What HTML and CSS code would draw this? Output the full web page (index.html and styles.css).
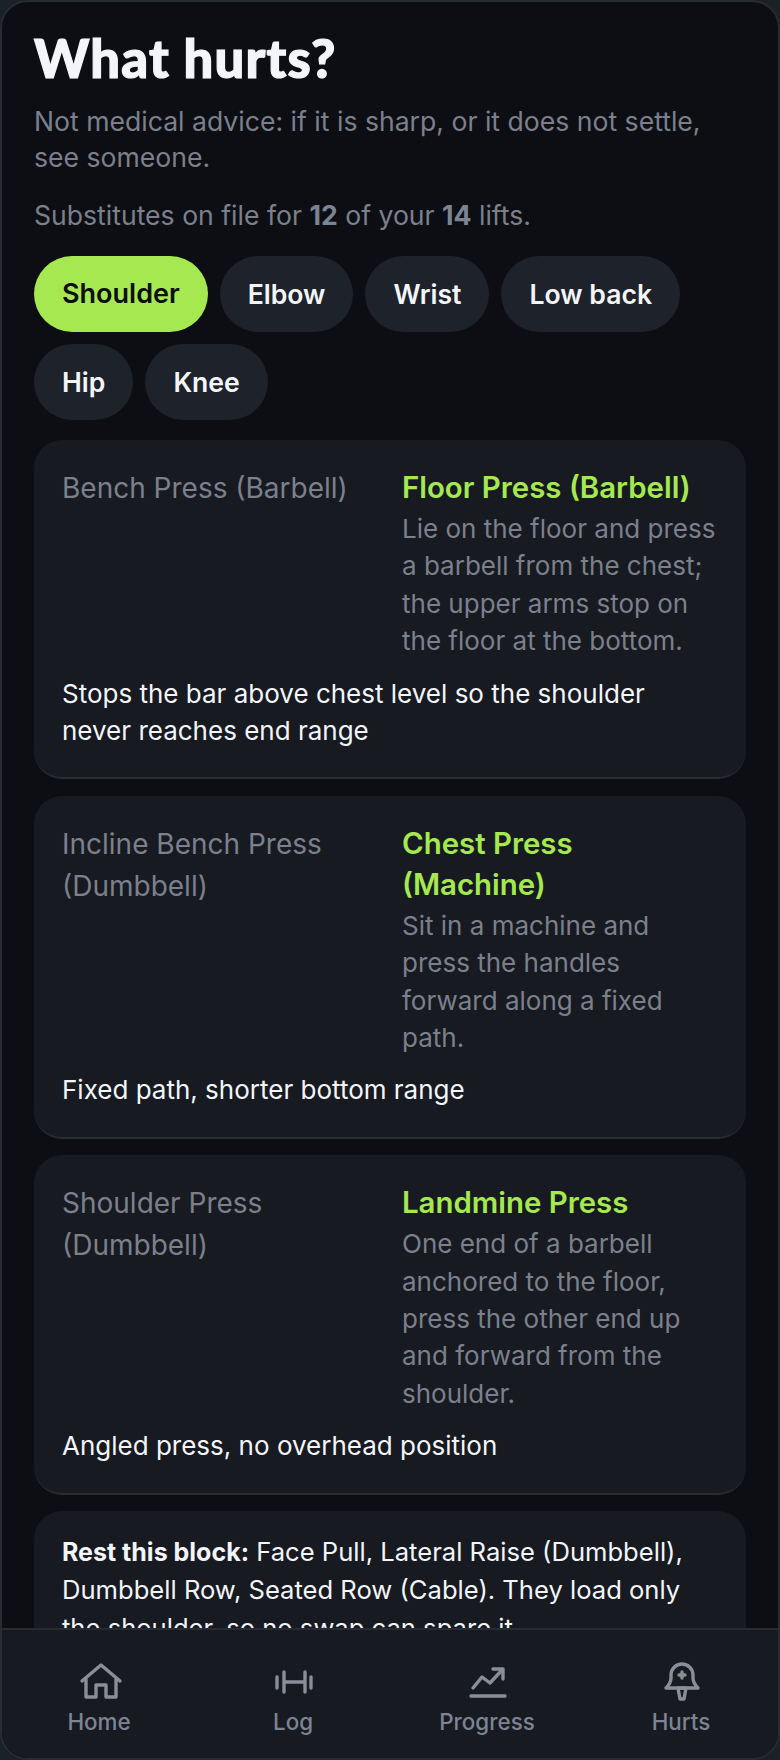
FILE: index.html
```html
<!DOCTYPE html>
<html lang="en">

<head>
  <meta charset="UTF-8">
  <title>What hurts?</title>
  <link rel="stylesheet" href="styles.css">
</head>

<body>
  <div class="phone">
    <main class="screen">
      <h1 class="screen__title">What hurts?</h1>
      <p class="screen__note">Not medical advice: if it is sharp, or it does not settle, see someone.</p>
      <p class="screen__count">Substitutes on file for <b>12</b> of your <b>14</b> lifts.</p>

      <div class="pills">
        <span class="pill pill--active">Shoulder</span>
        <span class="pill">Elbow</span>
        <span class="pill">Wrist</span>
        <span class="pill">Low back</span>
        <span class="pill">Hip</span>
        <span class="pill">Knee</span>
      </div>

      <section class="swap">
        <div class="swap__from">Bench Press (Barbell)</div>
        <div class="swap__to">
          <div class="swap__name">Floor Press (Barbell)</div>
          <div class="swap__desc">Lie on the floor and press a barbell from the chest; the upper arms stop on the floor at the bottom.</div>
        </div>
        <div class="swap__why">Stops the bar above chest level so the shoulder never reaches end range</div>
      </section>

      <section class="swap">
        <div class="swap__from">Incline Bench Press (Dumbbell)</div>
        <div class="swap__to">
          <div class="swap__name">Chest Press (Machine)</div>
          <div class="swap__desc">Sit in a machine and press the handles forward along a fixed path.</div>
        </div>
        <div class="swap__why">Fixed path, shorter bottom range</div>
      </section>

      <section class="swap">
        <div class="swap__from">Shoulder Press (Dumbbell)</div>
        <div class="swap__to">
          <div class="swap__name">Landmine Press</div>
          <div class="swap__desc">One end of a barbell anchored to the floor, press the other end up and forward from the shoulder.</div>
        </div>
        <div class="swap__why">Angled press, no overhead position</div>
      </section>

      <section class="rest">
        <b>Rest this block:</b> Face Pull, Lateral Raise (Dumbbell), Dumbbell Row, Seated Row (Cable). They load only the shoulder, so no swap can spare it.
      </section>
    </main>

    <nav class="tabs">
      <a class="tab">
        <svg class="tab__icon" viewBox="0 0 48 48">
          <path d="M7 24 L26 8 L45 24 M11 22 V40 H21 V28 H31 V40 H41 V22"></path>
        </svg>
        Home
      </a>
      <a class="tab">
        <svg class="tab__icon" viewBox="0 0 48 48">
          <path d="M8 20 V31 M15 15 V35 M36 15 V35 M42 20 V31 M15 25 H36"></path>
        </svg>
        Log
      </a>
      <a class="tab">
        <svg class="tab__icon" viewBox="0 0 48 48">
          <path d="M10 31 L19 20 L27 26 L40 12 M30 12 H40 V22"></path>
          <path d="M8 39 H42"></path>
        </svg>
        Progress
      </a>
      <a class="tab">
        <svg class="tab__icon" viewBox="0 0 48 48">
          <path d="M9 31 C12 28 14 25 14 21 V18 A11 11 0 0 1 36 18 V21 C36 25 38 28 41 31 Z"></path>
          <path d="M21 31 L23 42 H27 L29 31 Z"></path>
          <path d="M25 15 V21 M22 18 H28"></path>
        </svg>
        Hurts
      </a>
    </nav>
  </div>
</body>

</html>
```

FILE: styles.css
```css
* {
  box-sizing: border-box;
}

body {
  background-color: #1a2226;
  color: #f3f5f9;
  font-family: Inter, "Liberation Sans", sans-serif;
  margin: 0;
}

b {
  font-weight: 700;
}

.phone {
  background-color: #0c0e13;
  border: 2px solid #272b33;
  border-radius: 28px;
  display: flex;
  flex-direction: column;
  height: 1760px;
  overflow: hidden;
  width: 780px;
}

.screen {
  flex: 1;
  min-height: 0;
  overflow: hidden;
  padding: 24px 32px 0;
}

.screen__title {
  -webkit-text-stroke: 1.2px #f3f5f9;
  font-family: Lato, sans-serif;
  font-size: 52.5px;
  font-weight: 900;
  letter-spacing: 1.2px;
  line-height: 64px;
  margin: 0 0 13px;
}

.screen__note {
  color: #7c808c;
  font-size: 26.6px;
  line-height: 36px;
  margin: 0 0 22px;
}

.screen__count {
  color: #7c808c;
  font-size: 26.6px;
  line-height: 36px;
  margin: 0 0 23px;
}

.screen__count b {
  color: #7c8494;
}

.pills {
  display: flex;
  flex-wrap: wrap;
  gap: 12px;
  margin-bottom: 20px;
}

.pill {
  background-color: #1e222a;
  border-radius: 38px;
  font-size: 26.6px;
  font-weight: 600;
  line-height: 36px;
  padding: 20px 28px;
}

.pill--active {
  background-color: #a5e850;
  color: #0c0e13;
  font-size: 27px;
}

.swap {
  background-color: #171a21;
  border-bottom: 2px solid #272b33;
  border-radius: 28px;
  column-gap: 24px;
  display: grid;
  grid-template-columns: 1fr 1fr;
  margin-bottom: 16.4px;
  padding: 27px 28px 28px;
}

.swap__from {
  color: #7c808c;
  font-size: 28px;
  line-height: 42px;
}

.swap__name {
  color: #a5e850;
  font-size: 29.4px;
  font-weight: 600;
  line-height: 41px;
}

.swap__desc {
  color: #7c808c;
  font-size: 26px;
  line-height: 37.4px;
  margin-top: 2px;
}

.swap__why {
  font-size: 26px;
  grid-column: 1 / 3;
  line-height: 37.4px;
  margin-top: 15px;
}

.rest {
  background-color: #171a21;
  border-radius: 28px;
  font-size: 25.6px;
  line-height: 37.4px;
  padding: 22px 28px;
}

.rest b {
  font-size: 25px;
}

.tabs {
  background-color: #171a21;
  border-top: 2px solid #272b33;
  display: grid;
  flex: none;
  grid-template-columns: repeat(4, 1fr);
  height: 130px;
  padding-top: 27px;
}

.tab {
  align-items: center;
  color: #7c8494;
  display: flex;
  flex-direction: column;
  font-size: 22.4px;
  font-weight: 500;
  gap: 3px;
  line-height: 28px;
}

.tab__icon {
  display: block;
  fill: none;
  height: 48px;
  stroke: #8a8e98;
  stroke-linecap: round;
  stroke-linejoin: round;
  stroke-width: 3.4;
  width: 48px;
}
```
